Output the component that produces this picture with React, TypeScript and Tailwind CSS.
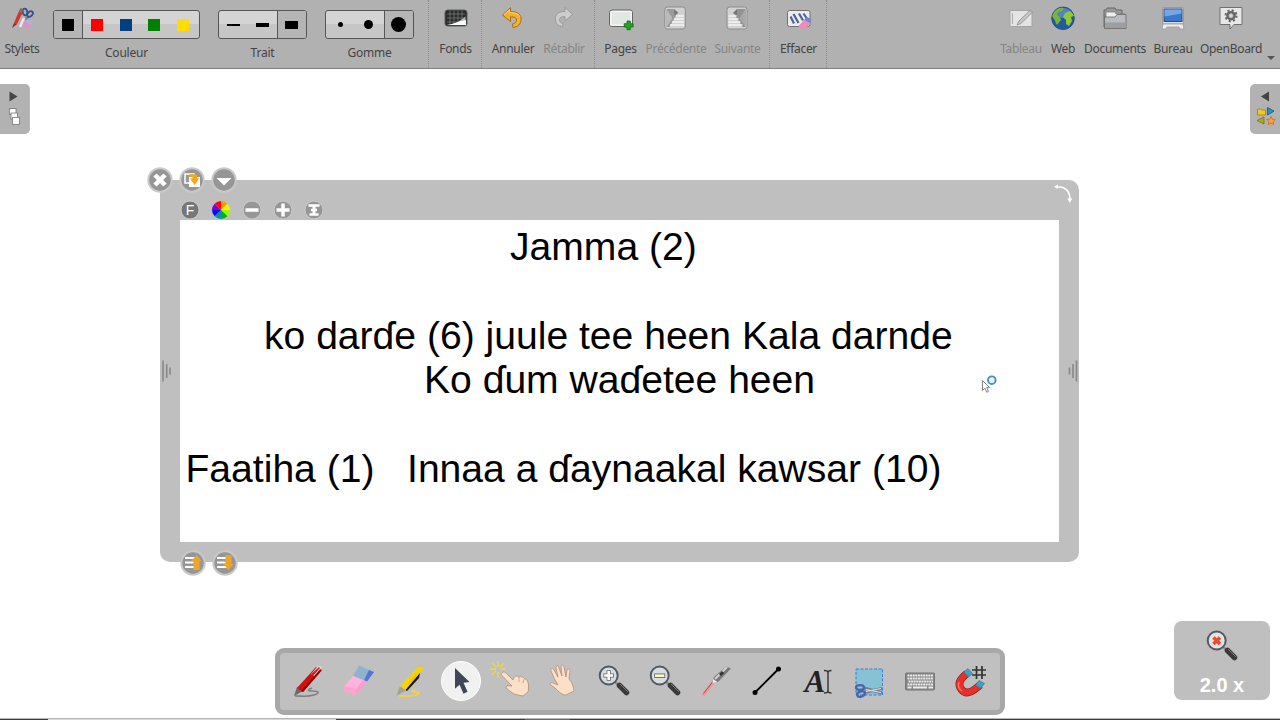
import type { ReactNode } from "react";

type CellProps = { label: string; width: string; muted?: boolean; children: ReactNode };

function Cell({ label, width, muted, children }: CellProps) {
  return (
    <div className={`flex h-full shrink-0 flex-col items-center pt-[6px] ${width}`}>
      <div className="h-6 w-6">{children}</div>
      <span
        className={`mt-[10px] whitespace-nowrap text-[12px] leading-[17px] tracking-[-0.3px] ${muted ? "text-[#858585]" : "text-[#444]"}`}
      >
        {label}
      </span>
    </div>
  );
}

function Group({ label, width, children }: { label: string; width: string; children: ReactNode }) {
  return (
    <div className={`flex h-full shrink-0 flex-col items-center pt-[10px] ${width}`}>
      <div className="flex h-[29px] overflow-hidden rounded-[3px] border border-[#555] bg-linear-to-b from-[#d4d4d4] from-50% to-[#c6c6c6] to-50%">
        {children}
      </div>
      <span className="mt-[5px] text-[12px] leading-[17px] tracking-[-0.2px] text-[#444]">{label}</span>
    </div>
  );
}

function Separator() {
  return <div className="-mx-px h-[68px] w-0.5 shrink-0 border-l border-dotted border-[#8c8c8c]" />;
}

function Ico({ children, size = 24 }: { children: ReactNode; size?: number }) {
  return (
    <svg width={size} height={size} viewBox={`0 0 ${size} ${size}`} className="block overflow-visible" fill="none">
      {children}
    </svg>
  );
}

function Toolbar() {
  return (
    <header className="flex h-[69px] shrink-0 border-b border-[#808080] bg-[#b1b1b1]">
      <Cell label="Stylets" width="w-[44px]">
        <Ico>
          <path d="M16 11l2 4M20 10l-5 4" stroke="#6e7894" strokeWidth="1.5" />
          <ellipse cx="15" cy="6" rx="2.300" ry="3.400" stroke="#35508f" strokeWidth="1.800" transform="rotate(-15 15 6)" />
          <ellipse cx="20" cy="8" rx="2.300" ry="3.200" stroke="#35508f" strokeWidth="1.800" transform="rotate(50 20 8)" />
          <path d="M14 12l-4 9" stroke="#e9e9e9" strokeWidth="2.500" />
          <path d="M4 17l5-12 3.500 2-6 12z" fill="#d33628" />
          <path d="M9 5l1.500-3 2.700 1.300-.7 3.200z" fill="#7a6a68" />
          <path d="M2 22l2-5 2.500 1.500z" fill="#71352d" />
          <path d="M13 17l5-4 5 2.500-4 7-6.500-2z" fill="#e88fc0" />
          <path d="M17 13l6 2.500-2 3.500-6-3z" fill="#9eb9dc" />
        </Ico>
      </Cell>
      <Group label="Couleur" width="w-[165px]">
        <div className="flex w-[29px] items-center justify-center border-r border-[#555] bg-[#b5b5b5]">
          <i className="h-3 w-3 bg-black" />
        </div>
        <div className="flex w-[116px] items-center justify-around pr-[2px]">
          <i className="h-3 w-3 bg-[#ff0000]" />
          <i className="h-3 w-3 bg-[#004080]" />
          <i className="h-3 w-3 bg-[#008000]" />
          <i className="h-3 w-3 bg-[#ffdd00]" />
        </div>
      </Group>
      <Group label="Trait" width="w-[107px]">
        <div className="flex w-[58px] items-center justify-around">
          <i className="h-0.5 w-[13px] bg-black" />
          <i className="h-1 w-[13px] bg-black" />
        </div>
        <div className="flex w-[29px] items-center justify-center border-l border-[#555] bg-[#b5b5b5] pr-px">
          <i className="h-2 w-[13px] bg-black" />
        </div>
      </Group>
      <Group label="Gomme" width="w-[107px]">
        <div className="flex w-[58px] items-center justify-around pl-px">
          <i className="h-[5px] w-[5px] rounded-full bg-black" />
          <i className="h-[9px] w-[9px] rounded-full bg-black" />
        </div>
        <div className="flex w-[29px] items-center justify-center border-l border-[#555] bg-[#b5b5b5] pr-px">
          <i className="h-[15px] w-[15px] rounded-full bg-black" />
        </div>
      </Group>
      <div className="w-[6px]" />
      <Separator />
      <Cell label="Fonds" width="w-[53px]">
        <Ico>
          <rect x="1" y="4" width="22" height="16" rx="2.500" fill="#2a2a2a" stroke="#566060" />
          <path d="M3 8h18M3 12h18M3 16h18M6 5v13M10 5v13M14 5v13M18 5v13" stroke="#777" strokeWidth=".8" />
          <path d="M2.500 18.500c8 0 13-3 19-8v8z" fill="#b4b4b4" />
          <path d="M3 19c7-1 12-4 19-5v5z" fill="#fafafa" />
        </Ico>
      </Cell>
      <Separator />
      <Cell label="Annuler" width="w-[62px]">
        <Ico>
          <path
            d="M1.500 9L9.500 1.500v4c7.500 0 11 3 10.500 8.500-.3 4-3 7-8 7.500l-.5-3.500c3-.8 4-2.200 4-4 0-2.300-2-3.200-6-3.200V15.500z"
            fill="#f6b12b"
            stroke="#a2670e"
            strokeWidth=".9"
          />
          <path d="M3 8.500l5.500-4.700v2.700c5 0 9 1.500 10.300 4" stroke="#ffdb85" strokeWidth=".8" />
        </Ico>
      </Cell>
      <Cell label="Rétablir" width="w-[40px]" muted>
        <Ico>
          <path
            d="M20.500 8.500L13 1.500v4c-6.500 0-10 3-9.500 8 .3 4 2.500 6.500 7 7l.5-3c-2.500-.5-3.500-2-3.500-3.700 0-2.300 2-3.300 5.500-3.300V15z"
            fill="#cdcdcd"
            stroke="#929292"
            strokeWidth=".8"
          />
        </Ico>
      </Cell>
      <div className="w-[11px]" />
      <Separator />
      <Cell label="Pages" width="w-[51px]">
        <Ico>
          <rect x=".5" y="4" width="23" height="16.500" rx="2.500" fill="#ececec" stroke="#666" />
          <rect x="2" y="5.500" width="20" height="13.500" fill="#e3e7e3" stroke="#fafafa" />
          <path d="M18 15h3.300v2.700h2.800V21h-2.800v2.700H18V21h-2.800v-3.300H18z" fill="#23a423" stroke="#0d6d10" strokeWidth=".8" />
        </Ico>
      </Cell>
      <Cell label="Précédente" width="w-[60px]" muted>
        <Ico>
          <rect x=".8" y="1" width="20.500" height="22" rx="2.500" fill="#d2d2d2" stroke="#8c8c8c" />
          <path d="M2.500 3h7l4 4-8 14h-3z" fill="#9a9a9a" />
          <path d="M2.500 21V3l6 9z" fill="#bababa" />
          <path d="M12 10h8M10 13h10M8 16h12M6 19h14" stroke="#f5f5f5" strokeWidth="1.300" />
          <path d="M10 3l4.500 4-4 2z" fill="#777" />
        </Ico>
      </Cell>
      <Cell label="Suivante" width="w-[63px]" muted>
        <Ico>
          <rect x="1" y="1" width="20" height="22" rx="2.500" fill="#d2d2d2" stroke="#8c8c8c" />
          <path d="M19.500 3h-8l-4 4 9 14h3z" fill="#929292" />
          <path d="M19.500 21V3l-6 9z" fill="#a8a8a8" />
          <path d="M2.500 10h8M2.500 13h10M2.500 16h12M2.500 19h14" stroke="#f5f5f5" strokeWidth="1.300" />
          <path d="M11 3L7 7l4 2z" fill="#777" />
        </Ico>
      </Cell>
      <div className="w-px" />
      <Separator />
      <Cell label="Effacer" width="w-[57px]">
        <Ico>
          <rect x=".5" y="4.500" width="22.500" height="16" rx="2" fill="#ececec" stroke="#707070" />
          <path d="M3.500 10.500l3.500 7M6.500 8l5 9M12 7.500l4 7M16.500 7.500l4 6" stroke="#4a6696" strokeWidth="2.200" />
          <path d="M11.500 20l5.500-6 6 3-4 6-6-.5z" fill="#ec8db7" />
          <path d="M17 14l3-3 4 2-1 4z" fill="#6f83d7" />
        </Ico>
      </Cell>
      <Separator />
      <div className="flex-1" />
      <Cell label="Tableau" width="w-[42px]" muted>
        <Ico>
          <rect x="1" y="4.500" width="22" height="16" rx="1" fill="#e4e4e4" stroke="#a2a2a2" />
          <path d="M3.500 7v11" stroke="#aaa" />
          <path d="M8 19l2-4L21 4.500l2 2-11 11z" fill="#c8c8c8" stroke="#848484" strokeWidth=".8" />
        </Ico>
      </Cell>
      <Cell label="Web" width="w-[42px]">
        <Ico>
          <circle cx="12" cy="12.300" r="11.300" fill="#235a9f" stroke="#244872" strokeWidth=".8" />
          <ellipse cx="12" cy="7" rx="8" ry="5" fill="#6a9bd1" opacity=".65" />
          <path d="M3 6c3-4 7-5 10-4l-2 3-4 1-1 3 3 2 1 3-4 5c-2-2-1-4-3-6l-2-3z" fill="#77b43c" />
          <path d="M14 7l5-2c2 1 3 3 4 5l-3 1 1 4-3 5-3-2v-4l-3-3z" fill="#91c83a" />
        </Ico>
      </Cell>
      <Cell label="Documents" width="w-[62px]">
        <Ico>
          <path d="M1 21V4h2l1-2h8l1 2h6v4" fill="#999" stroke="#666" />
          <path d="M3 21V6h9l1 2h9v13z" fill="#eee" stroke="#777" strokeWidth=".7" />
          <path d="M1.500 22.500V11H12l2-2.500h9V22.500z" fill="#b8bcc0" stroke="#666" strokeWidth=".8" />
          <path d="M2 16.500h20.500V22H2z" fill="#9b9fa2" />
        </Ico>
      </Cell>
      <Cell label="Bureau" width="w-[54px]">
        <Ico>
          <rect x="1.500" y="1.500" width="21" height="16.500" rx="1" fill="#dedede" stroke="#999" />
          <rect x="3" y="3" width="18" height="12.500" fill="#3978cf" stroke="#284e85" />
          <path d="M3.500 3.500h17v4l-17 3z" fill="#76a6e4" />
          <path d="M2 18h20l1 5h-4l-1-2H6l-1 2H1z" fill="#ededed" stroke="#999" strokeWidth=".8" />
        </Ico>
      </Cell>
      <Cell label="OpenBoard" width="w-[62px]">
        <Ico>
          <path d="M1 1.500h22v17H15L11 23v-4.500H1z" fill="#e8e8e8" stroke="#707070" strokeLinejoin="round" />
          <circle cx="12" cy="9.700" r="4.800" fill="#666" />
          <circle cx="12" cy="9.700" r="5.500" stroke="#666" strokeWidth="2" strokeDasharray="2.100 2.220" />
          <circle cx="12" cy="9.700" r="2" fill="#d9d9d9" stroke="#bbb" />
        </Ico>
      </Cell>
      <div className="flex w-[18px] items-end justify-center pb-2">
        <svg width="8" height="4" viewBox="0 0 8 4"><path d="M0 0h8L4 4z" fill="#555" /></svg>
      </div>
    </header>
  );
}

function SideTabs() {
  return (
    <div className="mt-[15px] flex h-[50px] shrink-0 justify-between">
      <div className="w-[30px] rounded-r-[5px] border-r border-[#bababa] bg-[#b2b2b2]">
        <svg width="30" height="50" viewBox="0 0 30 50">
          <path d="M9.500 7.500v10l8-5z" fill="#444" />
          <g fill="#fff" stroke="#777" strokeWidth=".8">
            <rect x="9.500" y="24.500" width="6.500" height="6" />
            <rect x="11" y="29" width="6.500" height="6" />
            <rect x="12.500" y="33.500" width="7" height="7" />
          </g>
        </svg>
      </div>
      <div className="w-[30px] rounded-l-[5px] bg-[#b2b2b2]">
        <svg width="30" height="50" viewBox="0 0 30 50">
          <path d="M19 7.500v10l-8-5z" fill="#444" />
          <path d="M7.500 25h3l1 1h4v5h-8z" fill="#f0c91c" stroke="#937711" strokeWidth=".7" />
          <path d="M17.500 23.500l6.500 3.700-6.500 3.800z" fill="#2b94bd" stroke="#14678d" />
          <path d="M14 33v7l-7-3.500z" fill="#afa726" stroke="#757019" strokeWidth=".8" />
          <path d="M21 32.500l1.300 2.700 3 .3-2.200 2 .6 3-2.700-1.500-2.700 1.500.6-3-2.200-2 3-.3z" fill="#ffa044" stroke="#db721c" />
        </svg>
      </div>
    </div>
  );
}

function RoundButton({ children }: { children: ReactNode }) {
  return (
    <svg width="26" height="26" viewBox="0 0 26 26" className="block">
      <circle cx="13" cy="13" r="11.700" fill="#969696" stroke="#c9c9c9" strokeWidth="2" />
      {children}
    </svg>
  );
}

function SmallButton({ children, fill = "#969696" }: { children: ReactNode; fill?: string }) {
  return (
    <svg width="20" height="20" viewBox="0 0 20 20" className="block">
      <circle cx="10" cy="10" r="9" fill={fill} stroke="#cacaca" />
      {children}
    </svg>
  );
}

const wheel = ["#ff9800", "#fff000", "#90ff00", "#00b020", "#0090a8", "#0010f0", "#8800c8", "#ff0010"];

function ColorWheel() {
  return (
    <svg width="20" height="20" viewBox="-10 -10 20 20" className="block">
      {wheel.map((c, i) => (
        <path key={c} d="M0 0V-9A9 9 0 0 1 6.364 -6.364Z" fill={c} transform={`rotate(${i * 45})`} />
      ))}
    </svg>
  );
}

function TextFrame() {
  return (
    <section className="relative mt-[46px] ml-[160px] h-[382px] w-[919px] shrink-0 rounded-[10px] bg-[#bfbfbf] pt-[40px] pr-[20px] pb-[20px] pl-[20px]">
      <div className="h-[322px] bg-white pt-[5px] text-[39.100px] leading-[44.400px] whitespace-pre text-black">
        <p className="pl-[330px]">Jamma (2)</p>
        <p>&nbsp;</p>
        <p className="pl-[84px]">ko darɗe (6) juule tee heen Kala darnde</p>
        <p className="pl-[244px]">Ko ɗum waɗetee heen</p>
        <p>&nbsp;</p>
        <p className="pl-[5.500px]">{"Faatiha (1)   Innaa a ɗaynaakal kawsar (10)"}</p>
      </div>
      <div className="absolute -top-[13.500px] -left-[13px] flex gap-[6px]">
        <RoundButton>
          <path d="M8 8l10 10M18 8L8 18" stroke="#fff" strokeWidth="4.500" />
        </RoundButton>
        <RoundButton>
          <path d="M6 7h9v9H6z" fill="#999" stroke="#fff" strokeWidth="1.500" />
          <path d="M10 10h11v10H10z" fill="#fff" />
          <path d="M10.500 7.200h5.500c2 0 2 1 2 4h2.200L15.700 18l-4.800-6.500h2.600V10h-3z" fill="#f5a717" />
        </RoundButton>
        <RoundButton>
          <path d="M5.500 11h15L13 18.500z" fill="#fff" />
        </RoundButton>
      </div>
      <div className="absolute top-[20px] left-[19.500px] flex gap-[11px]">
        <SmallButton fill="#777">
          <text x="10" y="15" textAnchor="middle" fill="#fff" fontSize="14" fontFamily="Liberation Sans, sans-serif">F</text>
        </SmallButton>
        <ColorWheel />
        <SmallButton><path d="M3.500 10h13" stroke="#fff" strokeWidth="3.500" /></SmallButton>
        <SmallButton><path d="M3.500 10h13M10 3.500v13" stroke="#fff" strokeWidth="3.500" /></SmallButton>
        <SmallButton><path d="M4.500 5.500h11M7 10h6M5.500 14.500h9" stroke="#fff" strokeWidth="2.500" /><path d="M10 6v8" stroke="#fff" strokeWidth="3" /></SmallButton>
      </div>
      <div className="absolute -bottom-[13.500px] left-[19.500px] flex gap-[6px]">
        <RoundButton>
          <path d="M5 8h11M5 12.500h11M5 17h11" stroke="#fff" strokeWidth="2.200" />
          <path d="M16.500 5l5.200 6H19.500v9h-6v-9h-2.200z" fill="#eaa52b" />
        </RoundButton>
        <RoundButton>
          <path d="M5 8h11M5 12.500h11M5 17h11" stroke="#fff" strokeWidth="2.200" />
          <path d="M16.500 20l5.200-6H19.500V5h-6v9h-2.200z" fill="#eaa52b" />
        </RoundButton>
      </div>
      <svg className="absolute top-[179px] left-[2px]" width="10" height="24" viewBox="0 0 10 24">
        <path d="M1 1.500v21M4.700 5v14M8 8.500v7" stroke="#888" strokeWidth="1.600" />
      </svg>
      <svg className="absolute top-[179px] right-[1.500px]" width="10" height="24" viewBox="0 0 10 24">
        <path d="M8.500 1.500v21M5 5v14M1.500 8.500v7" stroke="#888" strokeWidth="1.600" />
      </svg>
      <svg className="absolute top-[2.500px] right-[5px]" width="20" height="22" viewBox="0 0 20 22" fill="none">
        <path d="M3 4c9-1 13 5 13 13" stroke="#fff" strokeWidth="1.500" />
        <path d="M0 3.700l4-2.200v4.400zM13.300 15.500h5l-2.500 4.500z" fill="#fff" />
      </svg>
      <svg className="absolute top-[194px] left-[821px]" width="18" height="20" viewBox="0 0 18 20">
        <path d="M1.500 6.500v10l2.300-2.200 2 4 1.700-.8-1.800-3.800h3z" fill="#fff" stroke="#777" strokeWidth=".9" />
        <circle cx="10.800" cy="6.200" r="3.800" fill="#eaf6ff" stroke="#438dc8" strokeWidth="1.900" />
      </svg>
    </section>
  );
}

function Magnifier({ children, lens = "#d9dde0" }: { children: ReactNode; lens?: string }) {
  return (
    <Ico size={40}>
      <path d="M21 21l5 4" stroke="#8d8d8d" strokeWidth="2.500" />
      <path d="M25.500 24.500l7 7" stroke="#3a3a3a" strokeWidth="5.500" strokeLinecap="round" />
      <path d="M26 23l8 8" stroke="#777" strokeWidth="1" />
      <circle cx="14.700" cy="14.500" r="9" fill={lens} stroke="#50596a" strokeWidth="2" />
      {children}
    </Ico>
  );
}

const skin = { fill: "#fbdfc7", stroke: "#b08f79", strokeWidth: 0.8, strokeLinejoin: "round" as const };

const tools: ReactNode[] = [
  <Ico size={40}>
    <path d="M7 35c9 0 13 1 19-1s5-4-1-4-6-1-1-3" stroke="#808080" strokeWidth="1.600" />
    <path d="M6 35l3-9 6 4z" fill="#6b6b6b" />
    <path d="M9 27L28 6l6 3-19 22z" fill="#d40d0d" />
    <path d="M13 30L31 10l3-1-19 22z" fill="#8d0505" />
    <path d="M23 13l7-8 4 1-8 9z" fill="#f2dada" />
    <path d="M23 13l8-7 1 1-7 8z" fill="#e01a1a" />
  </Ico>,
  <Ico size={40}>
    <path d="M20 4.500L35 11l-7 9.500-14-5.500z" fill="#8fb3cf" />
    <path d="M30 9l5 2-7 9.500-3-1.200z" fill="#5275dc" />
    <path d="M14 15l14 5.500L17 34 5 29.500z" fill="#ff9bd0" />
    <path d="M14 15l10 4-7 9-11-3z" fill="#ffb4e0" />
    <path d="M5 24.500L16 28l1 6-12-4z" fill="#ffa4cf" />
  </Ico>,
  <Ico size={40}>
    <path d="M9 35c8 0 12 1 17-1s3-3-1-3-5-1 1-3" stroke="#f1cf4c" strokeWidth="1.800" />
    <path d="M6.500 34.500L10 25l6 4.500z" fill="#a7a28d" />
    <path d="M10 25L29 5l5 2-18 22z" fill="#f7d400" />
    <path d="M15.500 29L30 12l-1 5-12 13z" fill="#111" />
    <path d="M18 22l8-9 1 2-8 9z" fill="#e4c400" />
  </Ico>,
  <Ico size={40}>
    <circle cx="20" cy="20" r="19.500" fill="#f1f1f1" stroke="#fff" />
    <path d="M14 7l14.500 14-6 .7 4 9-4 2-4-9-4.500 4z" fill="#3f4755" />
  </Ico>,
  <Ico size={40}>
    <path d="M6 0v6M6 11v5M-2 8h6M9 8h5M0 2l4 4M12 2L8 6M0 14l4-4" stroke="#eadb42" strokeWidth="1.300" />
    <path d="M10 12c2-2 3-1 5 1l6 6c1-4 4-5 6-3 4-1 5 1 6 2 4 1 4 8 3 13l-5 4-5-1-4-1-7-5c-2-3 0-4 3-3h2L9.500 14c-.5-1-.2-1.500.5-2z" {...skin} />
    <path d="M27 16v5M32 18l-1 4" stroke="#bd9a80" strokeWidth=".7" />
  </Ico>,
  <Ico size={40}>
    <path d="M11 17L8 10c-1-3 2-3 3-1l4 7-2-9c0-3 3-3 3 0l3 8-1-9c0-3 3-2 3 0l2 10 1-7c1-2 3-1 3 1l-1 8c3 3 5 9 5 12l-8 4c-4 0-7-3-11-7l-4-3c-2-2 0-3 2-2l5 2z" {...skin} />
  </Ico>,
  <Magnifier><path d="M14.700 9.200v10.600M9.400 14.500h10.600" stroke="#666" strokeWidth="4.200" /><path d="M14.700 10v9M10.200 14.500h9" stroke="#fff" strokeWidth="2.700" /></Magnifier>,
  <Magnifier><path d="M9.200 14.700h11" stroke="#686861" strokeWidth="4.500" /><path d="M10 14.700h9.400" stroke="#f7f7ce" strokeWidth="2.700" /></Magnifier>,
  <Ico size={40}>
    <path d="M8 33l9-12" stroke="#e49a9a" strokeWidth="3.500" strokeLinecap="round" />
    <path d="M7.500 32.500l11-14" stroke="#bd4747" strokeWidth="1" />
    <path d="M16 21.500l2-5.500L30 5.500l5 2L22 21z" fill="#777" />
    <path d="M19 18L31 6" stroke="#d0d0d0" strokeWidth="2.200" />
    <path d="M24 14l3-3" stroke="#333" strokeWidth="3" />
    <path d="M17 18l4.500 3-5 1z" fill="#eee" />
  </Ico>,
  <Ico size={40}>
    <path d="M8 31.500L31.500 8" stroke="#000" strokeWidth="1.800" />
    <circle cx="8" cy="31.500" r="2.500" fill="#000" />
    <circle cx="31.500" cy="8" r="2.500" fill="#000" />
  </Ico>,
  <Ico size={40}>
    <text x="6.500" y="31" fill="#222" fontSize="31" fontStyle="italic" fontWeight="bold" fontFamily="Liberation Serif, serif">A</text>
    <path d="M26 9.500c3 0 4 1 4 2 0-1 1-2 3.500-2M30 11v20M26 32c3 0 4-1 4-2 0 1 1 2 3.500 2" stroke="#333" strokeWidth="1.400" />
  </Ico>,
  <Ico size={40}>
    <rect x="7" y="8" width="26.500" height="26" fill="#86c2d4" stroke="#3d7ed4" strokeDasharray="3 1.500" />
    <path d="M15 27l18 5M15 31.500l18-4" stroke="#777e87" strokeWidth="3" />
    <path d="M17 28.500l15 3M17 30.500l15-3" stroke="#dfe3e6" strokeWidth="1.200" />
    <ellipse cx="11" cy="26.500" rx="4" ry="2.300" stroke="#4d62a5" strokeWidth="2.200" />
    <ellipse cx="12" cy="33" rx="4" ry="2.500" stroke="#4d62a5" strokeWidth="2.200" transform="rotate(-20 12 33)" />
  </Ico>,
  <Ico size={40}>
    <rect x="5.500" y="12" width="29" height="17" rx="1" fill="#868686" stroke="#777" />
    <path d="M7.500 14.500h25.500M7.500 17.500h25.500M8.500 20.500h24.500M7.500 23.500h25.500" stroke="#ececec" strokeWidth="2" strokeDasharray="2 .6" />
    <path d="M7.500 26.500h4M13 26.500h14M28.500 26.500h4.500" stroke="#ececec" strokeWidth="1.900" />
  </Ico>,
  <Ico size={40}>
    <path d="M16 12.500C9 18 6 23 10.500 28.500S21 31.500 29 24" stroke="#861f1b" strokeWidth="7.800" />
    <path d="M16 12.500C9 18 6 23 10.500 28.500S21 31.500 29 24" stroke="#e8302a" strokeWidth="6.500" />
    <path d="M8 21c-1.500 4 0 7 3 9" stroke="#ff7169" strokeWidth="1.500" />
    <path d="M13 11l4-3.500 4.500 5-4 3.500zM24.500 24l3.500-4.500 5.500 3-4 5z" fill="#38a3c6" stroke="#3d6d82" strokeWidth=".6" />
    <path d="M25.500 5v13M31 5v13M21 9h14M21 14h14" stroke="#333" strokeWidth="1.700" />
  </Ico>,
];

function BottomArea() {
  return (
    <div className="flex h-[156px] shrink-0 pl-[275px]">
      <nav className="mt-[86px] flex h-[67px] w-[730px] items-center justify-center rounded-[9px] border-[5px] border-[#a8a8a8] bg-[#c0c0c0] pr-[2px] pb-px">
        {tools.map((tool, i) => (
          <div key={i} className="flex w-[51px] shrink-0 justify-center">{tool}</div>
        ))}
      </nav>
      <div className="mt-[59px] ml-[169px] flex h-[79px] w-[96px] flex-col items-center rounded-[8px] bg-[#bfbfbf] pt-[5px]">
        <Magnifier lens="#e4e4df">
          <path d="M11.500 11.500l6.500 6.500M18 11.500L11.500 18" stroke="#e84b36" strokeWidth="3.600" />
        </Magnifier>
        <span className="mt-[7px] text-[20px] leading-6 font-bold text-white">2.0 x</span>
      </div>
    </div>
  );
}

export default function App() {
  return (
    <main className="flex h-[720px] w-[1280px] flex-col overflow-hidden bg-white font-['Liberation_Sans',sans-serif]">
      <div className="font-['Noto_Sans',sans-serif]">
        <Toolbar />
      </div>
      <SideTabs />
      <TextFrame />
      <BottomArea />
      <div className="flex h-0.5 shrink-0 border-t border-[#b5b5b5]">
        <i className="w-[48px] bg-[#3d3d3d]" />
        <i className="w-[288px] bg-[#d8d8d8]" />
        <i className="w-[189px] bg-[#3d3d3d]" />
        <i className="w-[45px] bg-[#666]" />
        <i className="flex-1 bg-[#3d3d3d]" />
      </div>
    </main>
  );
}
